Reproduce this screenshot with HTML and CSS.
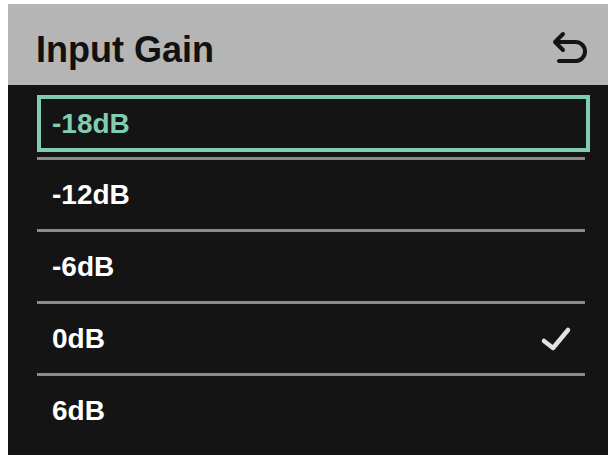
FILE: index.html
```html
<!DOCTYPE html>
<html lang="en">
<head>
  <meta charset="UTF-8" />
  <title>Input Gain</title>
  <link rel="stylesheet" href="styles.css">
</head>
<body>
  <div class="screen">
    <div class="header">
      <h1 class="title">Input Gain</h1>
      <svg class="back-icon" width="40" height="36" viewBox="0 0 40 36">
        <path d="M13 3 L5 11 L13 19 M5 11 H25.5 A9.5 9.5 0 0 1 25.5 30 H9" fill="none" stroke="#141414" stroke-width="4" stroke-linecap="round" stroke-linejoin="round"/>
      </svg>
    </div>

    <ul class="options">
      <li class="option selected">-18dB</li>
      <li class="option">-12dB</li>
      <li class="option">-6dB</li>
      <li class="option">0dB
        <svg class="check" width="32" height="26" viewBox="0 0 32 26">
          <path d="M4 15 L13 22 L28 4" fill="none" stroke="#e2e2e2" stroke-width="4.5" stroke-linecap="round" stroke-linejoin="round"/>
        </svg>
      </li>
      <li class="option">6dB</li>
    </ul>
  </div>
</body>
</html>
```

FILE: styles.css
```css
* {
  box-sizing: border-box;
}

body {
  margin: 0;
  background-color: #ffffff;
  font-family: 'Liberation Sans', Arial, sans-serif;
}

.screen {
  margin: 4px 4px 0 8px;
  height: 451px;
  background-color: #141414;
  overflow: hidden;
}

.header {
  display: flex;
  justify-content: space-between;
  align-items: flex-start;
  height: 81px;
  padding: 26px 18px 0 28px;
  background-color: #b5b5b5;
}

.back-icon {
  margin-top: 1px;
}

.title {
  margin: 0;
  font-size: 36px;
  line-height: 40px;
  font-weight: bold;
  color: #111111;
}

.options {
  list-style: none;
  margin: 0;
  padding: 10px 23px 0 29px;
}

.option {
  display: flex;
  justify-content: space-between;
  align-items: center;
  height: 72px;
  padding: 0 13px 0 15px;
  border-top: 3px solid #8a8a8a;
  color: #ffffff;
  font-size: 28px;
  font-weight: bold;
}

.option.selected {
  height: 57px;
  margin: 0 -5px 5px 0;
  padding-left: 11px;
  border: 4px solid #80cdb1;
  color: #80cdb1;
}
```
